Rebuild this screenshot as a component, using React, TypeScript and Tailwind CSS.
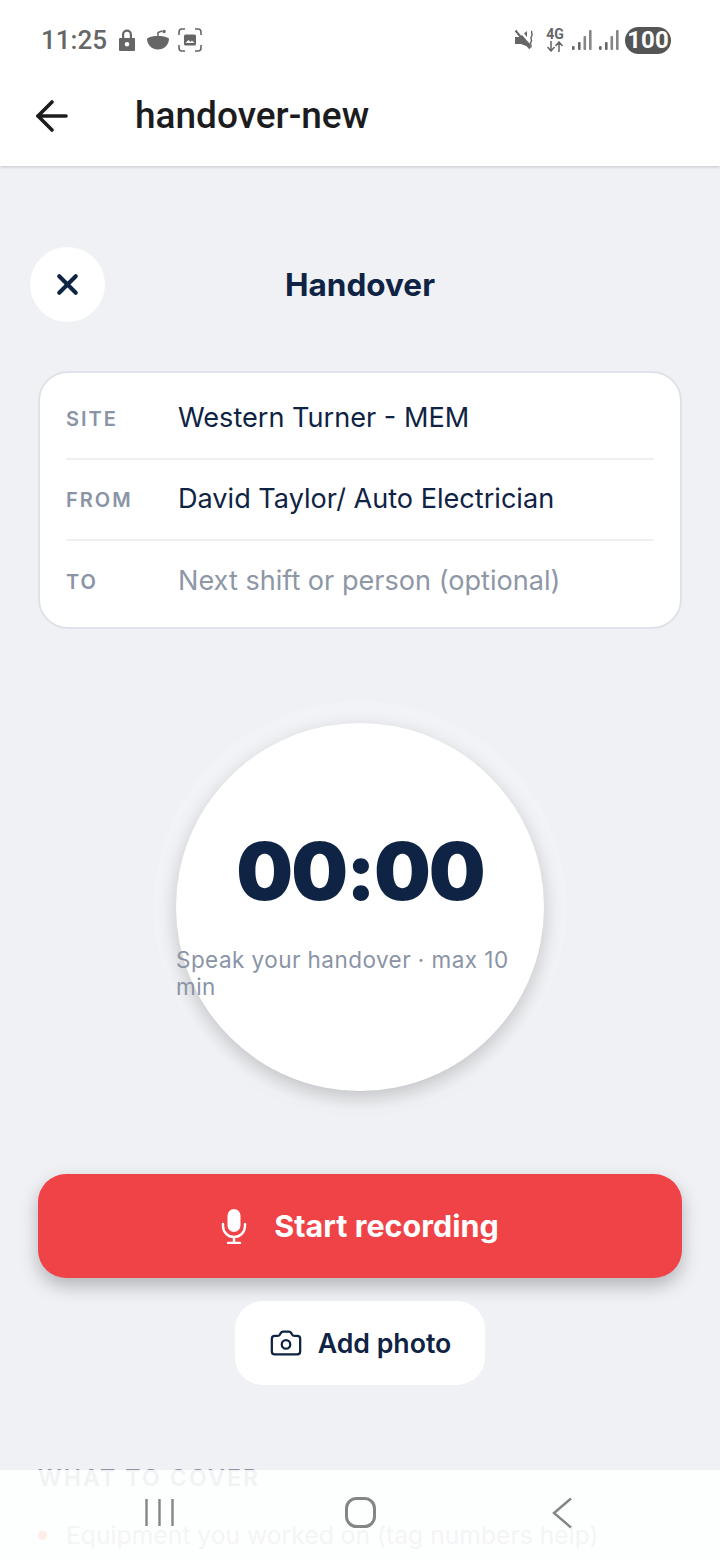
import React from 'react';
import { ArrowLeft, Camera, X } from 'lucide-react';

const SignalBars: React.FC<{ className?: string }> = ({ className }) => (
    <svg className={className} width="20" height="20" viewBox="0 0 20 20" fill="currentColor">
        <rect x="0" y="16" width="2.600" height="4" rx="1" />
        <rect x="6" y="12" width="2.600" height="8" rx="1" />
        <rect x="11.500" y="6" width="2.600" height="14" rx="1" opacity="0.8" />
        <rect x="17" y="0" width="2.600" height="20" rx="1" opacity="0.8" />
    </svg>
);

const StatusBar: React.FC = () => (
    <div className="flex items-center justify-between h-[80px] pl-[41px] pr-[49px] text-[#666666]">
        <div className="flex items-center">
            <span className="text-[26px] font-medium font-['Roboto',sans-serif] leading-none">11:25</span>
            {/* lock */}
            <svg className="ml-[11px]" width="18" height="24" viewBox="0 0 18 24" fill="currentColor">
                <path fillRule="evenodd" d="M4 10V6.500a5 5 0 0 1 10 0V10h2a1 1 0 0 1 1 1v11a1 1 0 0 1-1 1H2a1 1 0 0 1-1-1V11a1 1 0 0 1 1-1h2zm2.200 0h5.600V6.500a2.800 2.800 0 0 0-5.600 0V10zM9 14a2.300 2.300 0 1 0 0 4.600A2.300 2.300 0 0 0 9 14z" />
            </svg>
            {/* bowl */}
            <svg className="ml-[10px]" width="24" height="22" viewBox="0 0 24 22" fill="currentColor">
                <path d="M1 9.500c3-2 7-2.500 11-2.500s8 .5 11 2.500c0 6.500-5 11-11 11S1 16 1 9.500z" />
                <path d="M12 7.500V3.500l4-1.500" fill="none" stroke="currentColor" strokeWidth="1.500" />
                <circle cx="18" cy="2.500" r="1.700" />
            </svg>
            {/* screenshot frame */}
            <svg className="ml-[8px]" width="24" height="24" viewBox="0 0 24 24" fill="none" stroke="currentColor" strokeWidth="1.600">
                <path d="M1 7V4a3 3 0 0 1 3-3h3M17 1h3a3 3 0 0 1 3 3v3M23 17v3a3 3 0 0 1-3 3h-3M7 23H4a3 3 0 0 1-3-3v-3" />
                <rect x="6" y="6.500" width="12" height="11" rx="1.500" fill="currentColor" stroke="none" />
                <path d="M7.500 15l3-3 2 2 1.500-1.500 2.500 2.500z" fill="#ffffff" stroke="none" />
            </svg>
        </div>
        <div className="flex items-center">
            {/* muted speaker */}
            <svg width="22" height="24" viewBox="0 0 22 24" fill="currentColor">
                <path d="M1 9h4l3-2 8 9v3.500L7 16H1z" />
                <path d="M10 5.500l3-2.500v6z" />
                <path d="M1.500 2.500l14.500 18" stroke="currentColor" strokeWidth="2" />
                <path d="M18 3c-1.500 2 1.500 3-.5 5.500s1.500 3-.5 5.500 1.500 3-.5 5.500" fill="none" stroke="currentColor" strokeWidth="1.500" />
            </svg>
            {/* 4G with arrows */}
            <div className="ml-[10px] flex flex-col items-center w-[18px] font-['Roboto',sans-serif]">
                <span className="text-[14px] font-bold leading-[13px]">4G</span>
                <svg width="18" height="11" viewBox="0 0 18 11" fill="none" stroke="currentColor" strokeWidth="1.500">
                    <path d="M5 0v9M1.500 6L5 10l3.500-4M13 11V2M9.500 5L13 1l3.500 4" />
                </svg>
            </div>
            <SignalBars className="ml-[8px]" />
            <SignalBars className="ml-[7px]" />
            <span className="ml-[6px] flex items-center justify-center w-[46px] h-[27px] rounded-full bg-[#555555] text-white text-[24px] font-bold leading-none font-['Roboto',sans-serif]">
                100
            </span>
        </div>
    </div>
);

const Row: React.FC<{ label: string; value: string; muted?: boolean; last?: boolean }> = ({ label, value, muted, last }) => (
    <div className={`flex items-center h-[81px] ${last ? '' : 'border-b-2 border-[#eef0f4]'}`}>
        <span className="w-[112px] text-[20px] font-semibold tracking-[2px] text-[#8a94a6]">{label}</span>
        <span className={`text-[27.100px] ${muted ? 'text-[#8e97a6]' : 'text-[#0f2344]'}`}>{value}</span>
    </div>
);

const App: React.FC = () => {
    return (
        <div className="relative w-[720px] h-[1560px] overflow-hidden bg-[#eff1f5] font-['Inter',sans-serif]">
            <header className="bg-white shadow-[0_1px_3px_rgba(0,0,0,0.18)] h-[166px] relative z-10">
                <StatusBar />
                <div className="flex items-center h-[72px] pl-[28px]">
                    <ArrowLeft size={48} strokeWidth={1.800} className="text-[#1c1c1e]" />
                    <span className="ml-[59px] text-[37px] font-medium text-[#1c1c1e] font-['Roboto',sans-serif]">handover-new</span>
                </div>
            </header>

            <main className="px-[38px]">
                {/* title row */}
                <div className="relative flex items-center justify-center h-[76px] mt-[81px]">
                    <button className="absolute left-[-8px] top-0 flex items-center justify-center w-[75px] h-[75px] rounded-full bg-white text-[#0f2344]" aria-label="Close">
                        <X size={33} strokeWidth={3} />
                    </button>
                    <h1 className="text-[31.500px] font-bold text-[#0f2344]">Handover</h1>
                </div>

                <section className="mt-[48px] h-[258px] px-[26px] pt-[6px] rounded-[30px] bg-white border-2 border-[#dfe2e9]">
                    <Row label="SITE" value="Western Turner - MEM" />
                    <Row label="FROM" value="David Taylor/ Auto Electrician" />
                    <Row label="TO" value="Next shift or person (optional)" muted last />
                </section>

                {/* timer dial */}
                <div className="flex justify-center mt-[94px]">
                    <div className="flex flex-col items-center w-[368px] h-[368px] rounded-full bg-white shadow-[0_7px_20px_rgba(0,0,0,0.2),0_0_0_22px_rgba(255,255,255,0.18)]">
                        <div className="mt-[99px] text-[80px] leading-[97px] font-black tracking-[-2px] text-[#0f2344]">00:00</div>
                        <p className="mt-[27px] text-[22.500px] leading-[27px] tracking-[0.45px] text-[#8a94a6]">Speak your handover · max 10 min</p>
                    </div>
                </div>

                <button className="flex items-center justify-center w-full h-[104px] mt-[83px] rounded-[28px] bg-[#f04347] text-white shadow-[0_8px_18px_rgba(0,0,0,0.25)]">
                    {/* microphone */}
                    <svg width="26" height="36" viewBox="0 0 26 36" fill="none" stroke="currentColor" strokeWidth="2.400" strokeLinecap="round">
                        <rect x="6.500" y="1" width="13" height="23" rx="6.500" fill="currentColor" stroke="none" />
                        <path d="M2 16v2a11 11 0 0 0 22 0v-2M13 29v6M7 35h12" />
                    </svg>
                    <span className="ml-[27px] text-[30.500px] font-bold">Start recording</span>
                </button>

                <div className="flex justify-center mt-[23px]">
                    <button className="flex items-center justify-center w-[250px] h-[84px] rounded-[28px] bg-white text-[#0f2344]">
                        <Camera size={34} strokeWidth={1.600} />
                        <span className="ml-[15px] text-[26.700px] font-semibold">Add photo</span>
                    </button>
                </div>

                <h2 className="mt-[80px] text-[23px] leading-[26px] font-semibold tracking-[2.200px] text-[#8a94a6]">WHAT TO COVER</h2>
                <div className="flex items-center mt-[26px]">
                    <span className="w-[9px] h-[9px] rounded-full bg-[#f0703a]" />
                    <span className="ml-[19px] text-[24.700px] text-[#a0a6b2] whitespace-nowrap">Equipment you worked on (tag numbers help)</span>
                </div>
            </main>

            {/* system navigation over the page */}
            <nav className="absolute left-0 right-0 bottom-0 h-[90px] bg-white/[0.88] z-20">
                <svg className="w-full h-full" viewBox="0 0 720 90" fill="none" stroke="#858585" strokeWidth="2.400">
                    <path d="M146.500 29v27M159.500 29v27M172.500 29v27" />
                    <rect x="346.500" y="28.500" width="28" height="28" rx="10" strokeWidth="3" />
                    <path d="M571 28.500L554 43l17 14.500" />
                </svg>
            </nav>
        </div>
    );
};

export default App;
